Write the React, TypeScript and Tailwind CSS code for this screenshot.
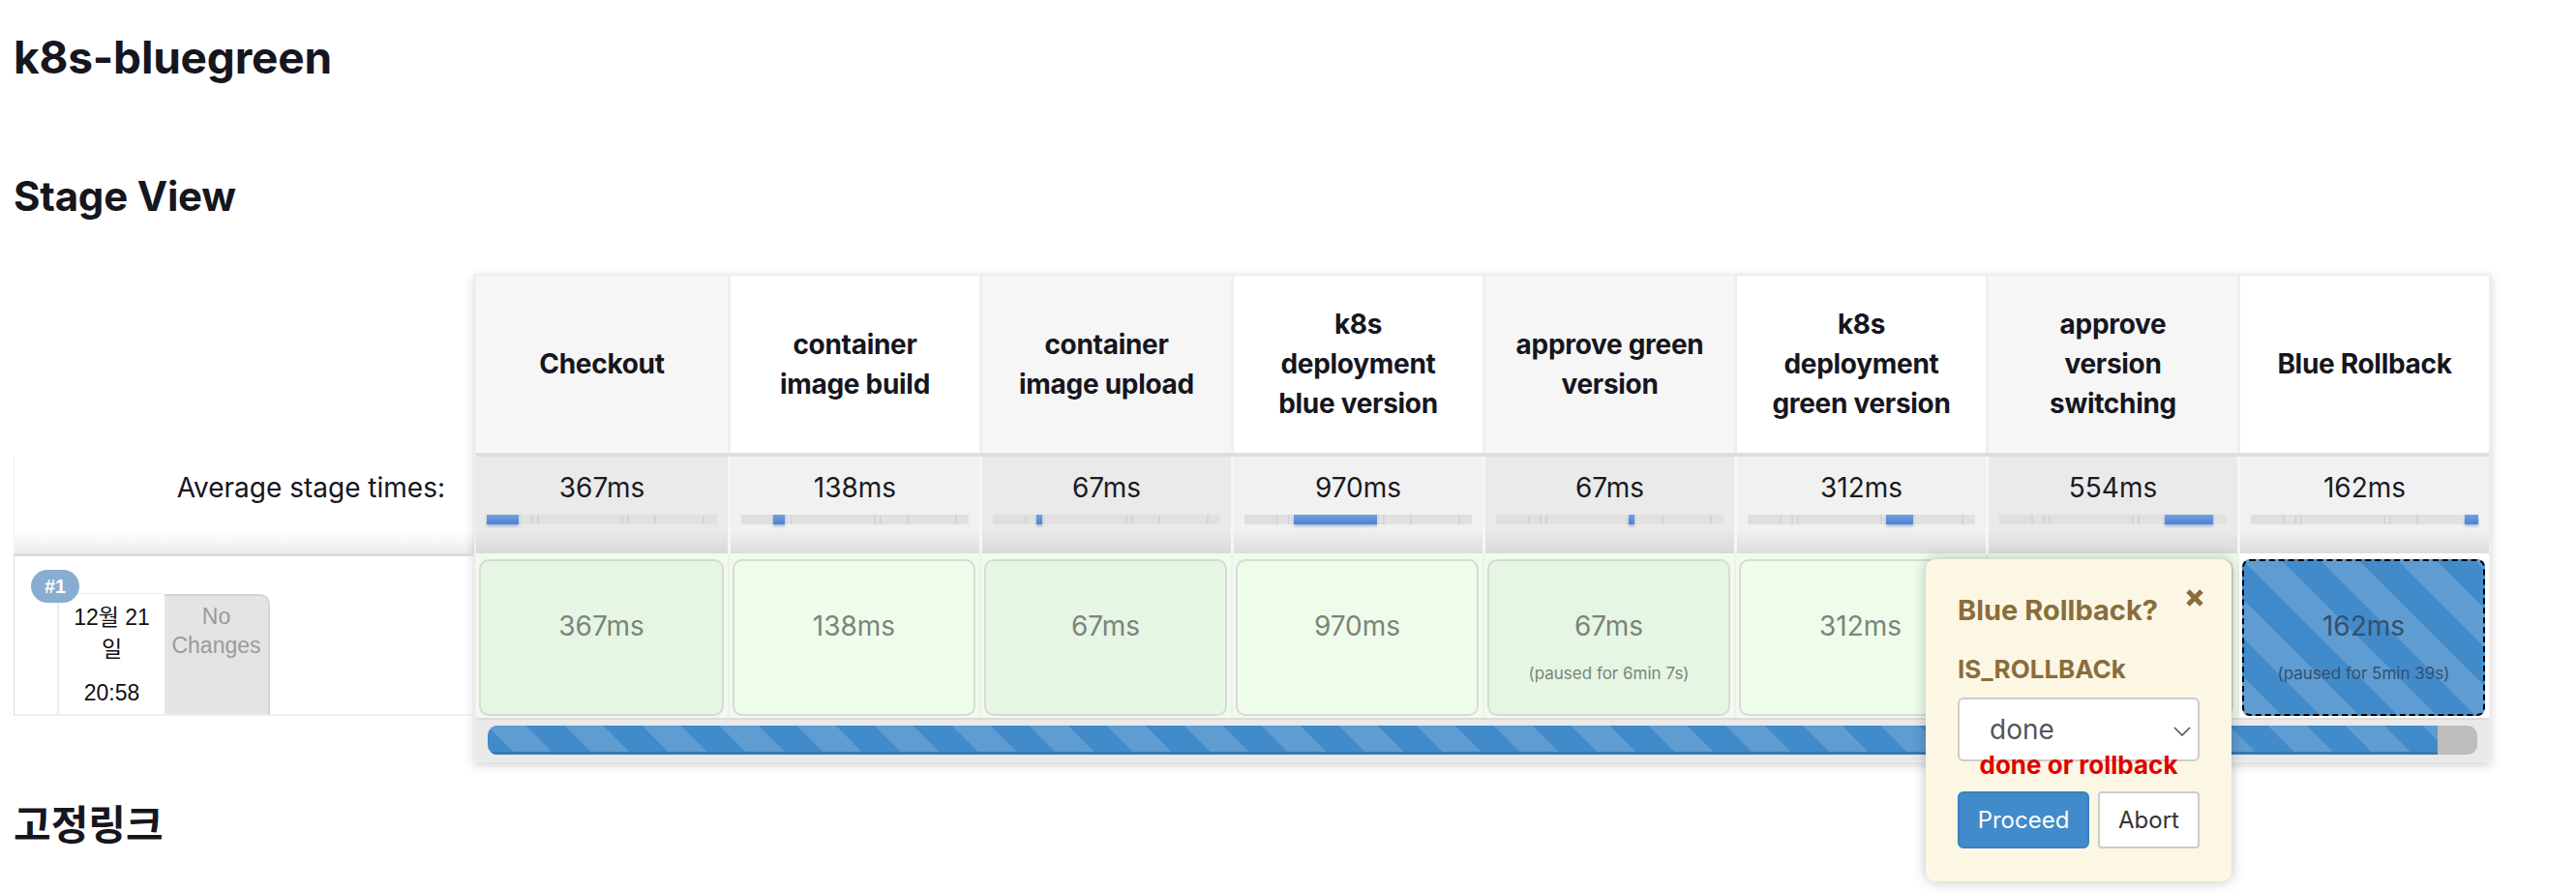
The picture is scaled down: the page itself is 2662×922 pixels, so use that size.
import React from 'react';

type Stage = { lines: string[]; ms: number; paused?: string; running?: boolean };

const stages: Stage[] = [
  { lines: ['Checkout'], ms: 367 },
  { lines: ['container', 'image build'], ms: 138 },
  { lines: ['container', 'image upload'], ms: 67 },
  { lines: ['k8s', 'deployment', 'blue version'], ms: 970 },
  { lines: ['approve green', 'version'], ms: 67, paused: '(paused for 6min 7s)' },
  { lines: ['k8s', 'deployment', 'green version'], ms: 312 },
  { lines: ['approve', 'version', 'switching'], ms: 554 },
  { lines: ['Blue Rollback'], ms: 162, paused: '(paused for 5min 39s)', running: true },
];

const total = stages.reduce((a, s) => a + s.ms, 0);

const STRIPES =
  'bg-[#428bca] bg-[linear-gradient(45deg,rgba(255,255,255,0.15)_25%,transparent_25%,transparent_50%,rgba(255,255,255,0.15)_50%,rgba(255,255,255,0.15)_75%,transparent_75%,transparent)] bg-[length:80px_80px]';

function MiniBar({ active }: { active: number }) {
  return (
    <div className="mx-[11px] mt-[11px] flex h-[10px] bg-[#dcdcdc]">
      {stages.map((s, i) => (
        <div
          key={i}
          style={{ width: `${(s.ms / total) * 100}%` }}
          className={
            i === active
              ? 'h-full bg-[linear-gradient(to_bottom,#6fa0e3,#4e83cf)] shadow-[0_2px_3px_rgba(70,120,200,0.45)]'
              : i === 0
              ? 'h-full bg-[#dfdfdf]'
              : 'h-full border-l-2 border-[#d5d5d5] bg-[#e1e1e1]'
          }
        />
      ))}
    </div>
  );
}

export default function App() {
  return (
    <div className="min-h-[922px] bg-white font-['Inter',sans-serif] text-[#16161e]">
      <div className="pl-[14px] pt-[36px]">
        <h1 className="text-[46px] font-bold leading-[46px] tracking-[-0.2px]">k8s-bluegreen</h1>
        <h2 className="mt-[100px] text-[42px] font-bold leading-[42px] tracking-[-0.2px]">Stage View</h2>

        <div className="relative mt-[59px] flex">
          {/* left label column */}
          <div className="flex w-[476px] flex-col">
            <div className="h-[189px]" />
            <div className="flex h-[100px] justify-end border-l border-[#f0f0f0] bg-[linear-gradient(to_bottom,#ffffff_78%,#ebebeb)] pr-[30px] pt-[15px] text-[28px] leading-[34px]">
              Average stage times:
            </div>
            <div className="relative h-[168px] border-b-2 border-l border-t-[3px] border-[#dcdcdc] border-b-[#eeeeee] font-['Liberation_Sans','Noto_Sans_CJK_KR',sans-serif] text-[23px]">
              <div className="absolute left-[17px] top-[14px] z-10 flex h-[34px] w-[50px] items-center justify-center rounded-full bg-[#89acd1] text-[20px] font-bold text-white">
                #1
              </div>
              <div className="ml-[44px] mt-[38px] flex">
                <div className="flex h-[125px] w-[111px] flex-col items-center border-l-2 border-t border-[#ececec] bg-white pt-[8px] leading-[33px] text-[#111]">
                  <div>12월 21</div>
                  <div>일</div>
                  <div className="mt-[12px]">20:58</div>
                </div>
                <div className="mt-[1px] flex h-[124px] w-[109px] flex-col items-center rounded-tr-[10px] border-r-2 border-t-2 border-[#d4d4d4] bg-[#e4e4e4] pt-[6px] leading-[30px] text-[#9b9b9b]">
                  <div>No</div>
                  <div>Changes</div>
                </div>
              </div>
            </div>
          </div>

          {/* stage table */}
          <div className="w-[2084px] border-2 border-[#eeeeee] shadow-[0_3px_10px_rgba(0,0,0,0.18)]">
            {/* header */}
            <div className="flex h-[183px]">
              {stages.map((s, i) => (
                <div
                  key={i}
                  className={`flex w-[260px] flex-col items-center justify-center text-center text-[28px] font-bold leading-[41px] tracking-[-0.3px] ${
                    i % 2 === 0 ? 'bg-[#f6f6f6]' : 'bg-white'
                  } ${i > 0 ? 'border-l-[3px] border-[#efefef]' : ''}`}
                >
                  {s.lines.map((l, j) => (
                    <div key={j}>{l}</div>
                  ))}
                </div>
              ))}
            </div>
            {/* averages */}
            <div className="flex h-[104px] border-t-4 border-[#dedede]">
              {stages.map((s, i) => (
                <div
                  key={i}
                  className={`w-[260px] pt-[15px] ${
                    i % 2 === 0
                      ? 'bg-[linear-gradient(to_bottom,#eaeaea_75%,#d9d9d9)]'
                      : 'bg-[linear-gradient(to_bottom,#f1f1f1_75%,#dddddd)]'
                  } ${i > 0 ? 'border-l-[3px] border-[#f6f6f6]' : ''}`}
                >
                  <div className="text-center text-[28px] leading-[34px] text-[#1a1a1f]">{s.ms}ms</div>
                  <MiniBar active={i} />
                </div>
              ))}
            </div>
            {/* build row */}
            <div className="flex h-[170px]">
              {stages.map((s, i) => (
                <div
                  key={i}
                  className={`w-[260px] pb-[2px] pl-[3px] pr-[4px] pt-[6px] ${
                    i > 0 ? 'border-l-2 border-[#eef0ed]' : ''
                  } ${s.running ? 'bg-white' : 'bg-[#f0fbee]'}`}
                >
                  {s.running ? (
                    <div className={`flex h-full flex-col items-center rounded-[8px] border-2 border-dashed border-black pt-[50px] text-[#33506f] ${STRIPES}`}>
                      <div className="text-[28px] leading-[34px]">{s.ms}ms</div>
                      {s.paused && <div className="mt-[21px] text-[17px] leading-[22px]">{s.paused}</div>}
                    </div>
                  ) : (
                    <div
                      className={`flex h-full flex-col items-center rounded-[10px] border-2 border-[#d6dbd5] pt-[50px] text-[#7c837c] ${
                        i % 2 === 0 ? 'bg-[#e5f6e3]' : 'bg-[#eefdea]'
                      }`}
                    >
                      <div className="text-[28px] leading-[34px]">{s.ms}ms</div>
                      {s.paused && <div className="mt-[21px] text-[17px] leading-[22px]">{s.paused}</div>}
                    </div>
                  )}
                </div>
              ))}
            </div>
            {/* progress row */}
            <div className="h-[44px] border-t-2 border-[#dcdcdc] bg-[#e9e9e9] px-[12px] pt-[6px]">
              <div className="h-[30px] overflow-hidden rounded-[10px] bg-[linear-gradient(to_right,#c9c9c9,#bdbdbd)]">
                <div className={`h-full w-[98%] border-b-[3px] border-[#3a78b3] ${STRIPES}`} />
              </div>
            </div>
          </div>

          {/* input popover */}
          <div className="absolute left-[1976px] top-[295px] z-20 h-[333px] w-[316px] rounded-[10px] bg-[#fcf7e4] pl-[33px] pt-[35px] shadow-[0_0_14px_rgba(0,0,0,0.25)]">
            <svg className="absolute left-[268px] top-[30px]" width="20" height="20" viewBox="0 0 20 20">
              <path d="M3 3 L17 17 M17 3 L3 17" stroke="#8a6d3b" strokeWidth="5" fill="none" />
            </svg>
            <div className="text-[29px] font-bold leading-[36px] text-[#8a6d3b]">Blue Rollback?</div>
            <div className="mt-[27px] text-[26px] font-bold leading-[32px] text-[#8a6d3b]">IS_ROLLBACk</div>
            <div className="relative mt-[13px] flex h-[66px] w-[250px] items-center rounded-[6px] border-2 border-[#cccccc] bg-white pl-[31px] text-[28px] text-[#555555]">
              done
              <svg className="absolute right-[7px] top-[28px]" width="18" height="10" viewBox="0 0 18 10">
                <path d="M1 1 L9 9 L17 1" stroke="#555" strokeWidth="1.6" fill="none" />
              </svg>
            </div>
            <div className="relative -mt-[12px] w-[250px] text-center text-[26px] font-bold leading-[32px] text-[#e00000]">
              done or rollback
            </div>
            <div className="mt-[11px] flex gap-[9px] text-[24px]">
              <div className="flex h-[59px] w-[136px] items-center justify-center rounded-[6px] border-2 border-[#3a80bf] bg-[#428bca] text-white">
                Proceed
              </div>
              <div className="flex h-[59px] w-[105px] items-center justify-center rounded-[4px] border-2 border-[#cccccc] bg-white text-[#333333]">
                Abort
              </div>
            </div>
          </div>
        </div>

        <h2 className="mt-[41px] font-['Noto_Sans_CJK_KR',sans-serif] text-[42px] font-bold leading-[42px]">고정링크</h2>
      </div>
    </div>
  );
}
